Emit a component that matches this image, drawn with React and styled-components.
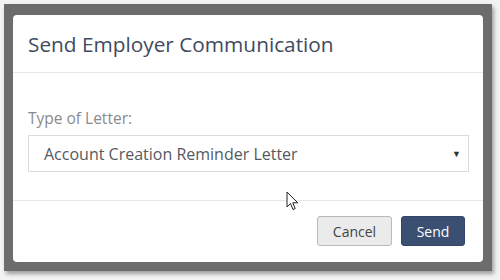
import React from "react";
import styled, { createGlobalStyle } from "styled-components";

const Global = createGlobalStyle`
  html, body { margin: 0; padding: 0; background: #f3f3f3; }
  body { font-family: "Open Sans", "Noto Sans", sans-serif; }
`;

const Page = styled.div`
  width: 500px;
  height: 280px;
  box-sizing: border-box;
  padding: 4px 8px 9px 4px;
  background: #f3f3f3;
  position: relative;
  overflow: hidden;
`;

const Backdrop = styled.div`
  height: 100%;
  box-sizing: border-box;
  background: #6c6c6c;
  padding: 11px 9px 9px 9px;
  box-shadow: 2px 3px 4px rgba(0, 0, 0, 0.35);
  display: flex;
`;

const Modal = styled.div`
  flex: 1;
  background: #fff;
  border-radius: 4px;
  display: flex;
  flex-direction: column;
`;

const Header = styled.div`
  height: 58px;
  box-sizing: border-box;
  padding: 0 15px;
  display: flex;
  align-items: center;
  border-bottom: 1px solid #e8e8e8;
`;

const Title = styled.h4`
  margin: 0;
  font-family: "Open Sans", sans-serif;
  font-weight: 400;
  font-size: 20.8px;
  color: #3e4b61;
  padding-top: 1px;
`;

const Body = styled.div`
  height: 128px;
  box-sizing: border-box;
  padding: 35px 14px 0 15px;
  border-bottom: 1px solid #e8e8e8;
`;

const Label = styled.label`
  display: block;
  font-size: 15.5px;
  line-height: 20px;
  color: #8a8a8a;
  margin-bottom: 7px;
`;

const Select = styled.div`
  height: 37px;
  box-sizing: border-box;
  border: 1px solid #dcdcdc;
  display: flex;
  align-items: center;
  justify-content: space-between;
  padding: 0 7px 0 15px;
  font-size: 16px;
  color: #555a60;
`;

const Caret = styled.span`
  font-size: 9px;
  color: #333;
`;

const Footer = styled.div`
  flex: 1;
  display: flex;
  justify-content: flex-end;
  align-items: flex-start;
  gap: 9px;
  padding: 15px 18px 0 0;
`;

const Button = styled.button`
  height: 30px;
  box-sizing: border-box;
  width: ${(p) => p.$w}px;
  border-radius: 3px;
  font-family: "Open Sans", sans-serif;
  font-size: 14px;
  padding: 0;
  border: 1px solid ${(p) => (p.$primary ? "#33466a" : "#b9b9b9")};
  background: ${(p) => (p.$primary ? "#3b4f72" : "#ebebeb")};
  color: ${(p) => (p.$primary ? "#fff" : "#444")};
`;

const Cursor = styled.svg`
  position: absolute;
  left: 286px;
  top: 191px;
`;

export default function App() {
  return (
    <>
      <Global />
      <Page>
        <Backdrop>
          <Modal>
            <Header>
              <Title>Send Employer Communication</Title>
            </Header>
            <Body>
              <Label>Type of Letter:</Label>
              <Select>
                <span>Account Creation Reminder Letter</span>
                <Caret>▼</Caret>
              </Select>
            </Body>
            <Footer>
              <Button $w={75}>Cancel</Button>
              <Button $w={64} $primary>Send</Button>
            </Footer>
          </Modal>
        </Backdrop>
        <Cursor width="14" height="22" viewBox="0 0 14 22">
          <path
            d="M1 1 L1 16 L4.5 12.5 L7 18.5 L9.2 17.6 L6.8 11.8 L11.8 11.8 Z"
            fill="#fff"
            stroke="#222"
            strokeWidth="1"
            strokeLinejoin="round"
          />
        </Cursor>
      </Page>
    </>
  );
}
